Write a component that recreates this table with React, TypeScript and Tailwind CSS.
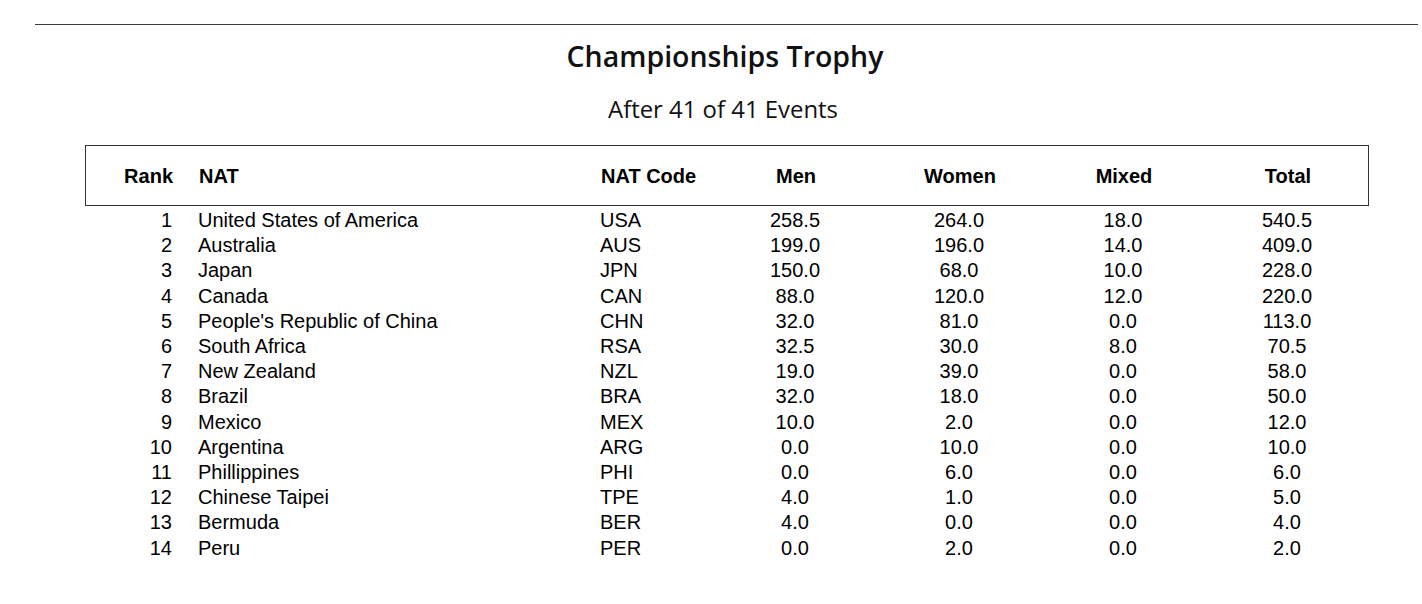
import React from "react";

type Row = [number, string, string, string, string, string, string];

const rows: Row[] = [
  [1, "United States of America", "USA", "258.5", "264.0", "18.0", "540.5"],
  [2, "Australia", "AUS", "199.0", "196.0", "14.0", "409.0"],
  [3, "Japan", "JPN", "150.0", "68.0", "10.0", "228.0"],
  [4, "Canada", "CAN", "88.0", "120.0", "12.0", "220.0"],
  [5, "People's Republic of China", "CHN", "32.0", "81.0", "0.0", "113.0"],
  [6, "South Africa", "RSA", "32.5", "30.0", "8.0", "70.5"],
  [7, "New Zealand", "NZL", "19.0", "39.0", "0.0", "58.0"],
  [8, "Brazil", "BRA", "32.0", "18.0", "0.0", "50.0"],
  [9, "Mexico", "MEX", "10.0", "2.0", "0.0", "12.0"],
  [10, "Argentina", "ARG", "0.0", "10.0", "0.0", "10.0"],
  [11, "Phillippines", "PHI", "0.0", "6.0", "0.0", "6.0"],
  [12, "Chinese Taipei", "TPE", "4.0", "1.0", "0.0", "5.0"],
  [13, "Bermuda", "BER", "4.0", "0.0", "0.0", "4.0"],
  [14, "Peru", "PER", "0.0", "2.0", "0.0", "2.0"],
];

const grid = "grid grid-cols-[87px_428px_113px_164px_164px_164px_164px]";

export default function App() {
  return (
    <div className="w-full min-h-[604px] bg-white text-black">
      <div className="pt-[24px] pl-[35px] pr-[4px]">
        <div className="h-px bg-[#3a3a3a]" />
      </div>
      <div
        className="mt-[12px] pl-[28px] text-center text-[28.5px] leading-[38px] font-semibold text-[#111]"
        style={{ fontFamily: '"Open Sans", "Noto Sans", sans-serif' }}
      >
        Championships Trophy
      </div>
      <div
        className="mt-[18px] pl-[24px] text-center text-[23.9px] leading-[32px] text-[#111]"
        style={{ fontFamily: '"Open Sans", "Noto Sans", sans-serif' }}
      >
        After 41 of 41 Events
      </div>
      <div
        className="ml-[85px] mt-[20px] w-[1284px]"
        style={{ fontFamily: '"Liberation Sans", Arial, sans-serif' }}
      >
        <div className={`${grid} h-[61px] items-center border border-[#333] text-[20px] font-bold`}>
          <div className="text-right">Rank</div>
          <div className="pl-[26px]">NAT</div>
          <div>NAT Code</div>
          <div className="text-center">Men</div>
          <div className="text-center">Women</div>
          <div className="text-center">Mixed</div>
          <div className="text-center">Total</div>
        </div>
        <div className="pt-[2px] text-[20px]">
          {rows.map((r) => (
            <div key={r[0]} className={`${grid} h-[25.2px] items-center leading-[25px]`}>
              <div className="text-right">{r[0]}</div>
              <div className="pl-[26px]">{r[1]}</div>
              <div>{r[2]}</div>
              <div className="text-center">{r[3]}</div>
              <div className="text-center">{r[4]}</div>
              <div className="text-center">{r[5]}</div>
              <div className="text-center">{r[6]}</div>
            </div>
          ))}
        </div>
      </div>
    </div>
  );
}
